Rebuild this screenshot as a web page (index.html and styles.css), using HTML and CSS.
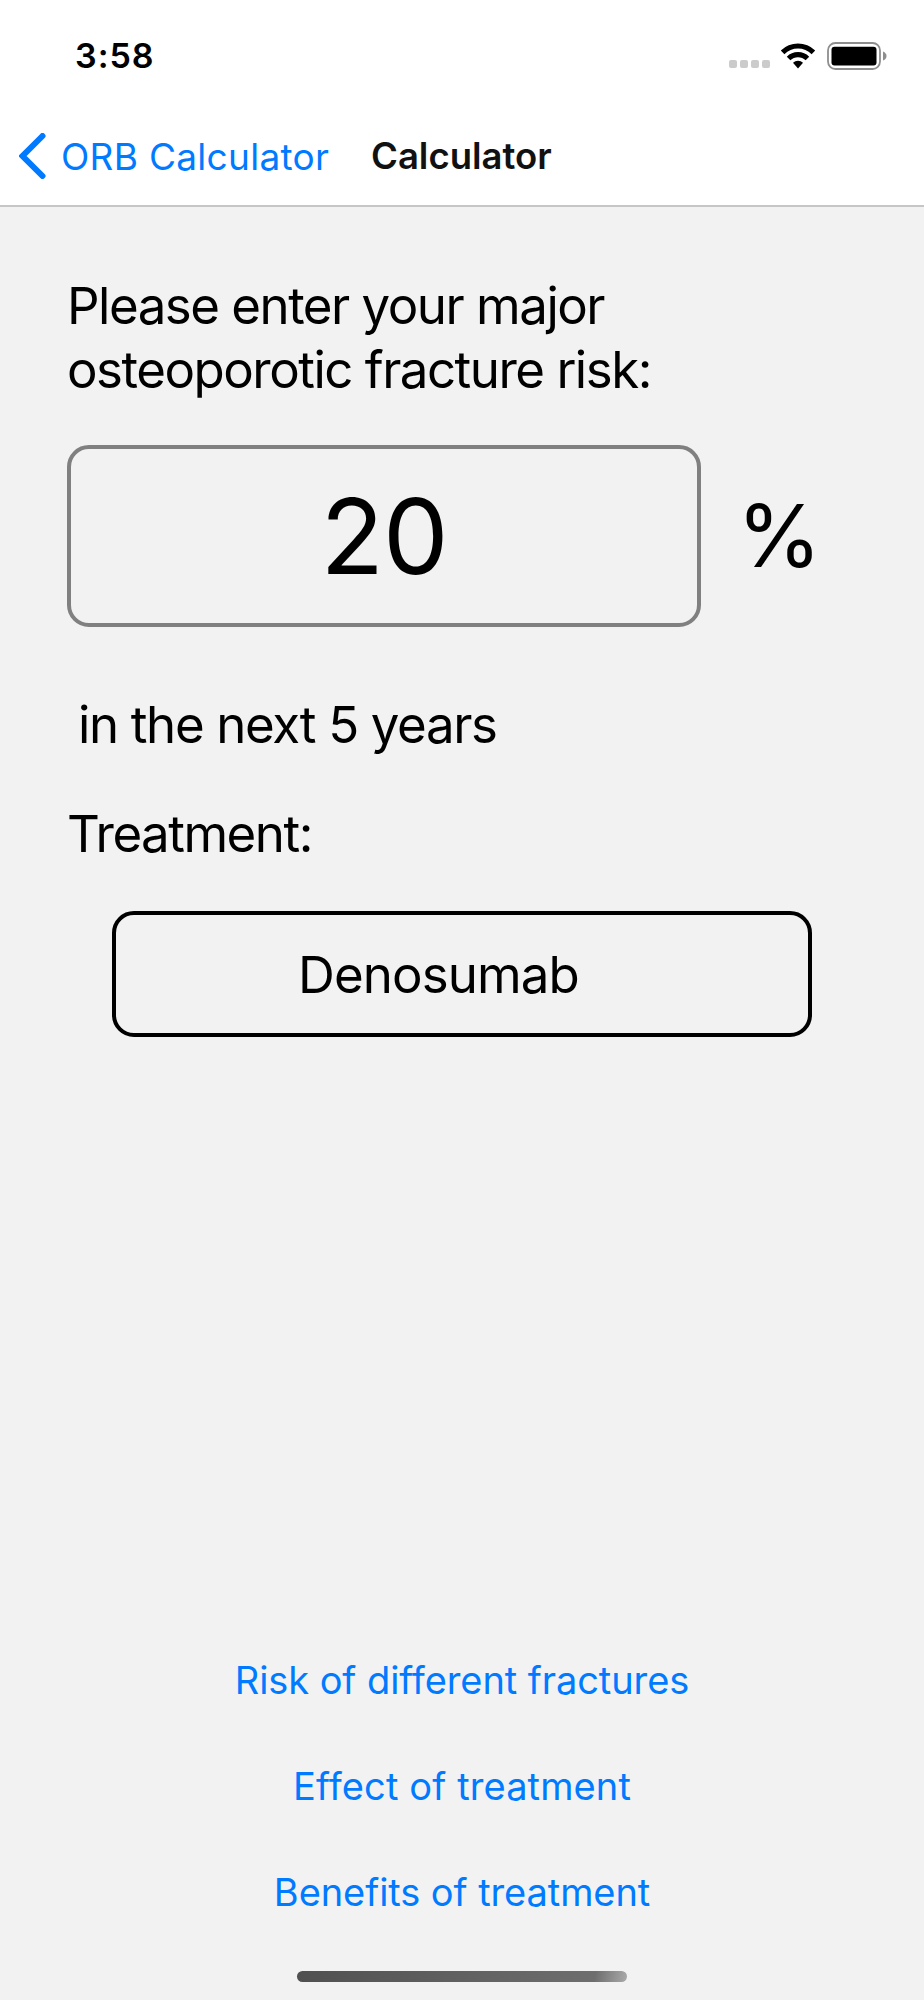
FILE: index.html
```
<!DOCTYPE html>
<html lang="en">
<head>
  <meta charset="UTF-8">
  <title>Calculator</title>
  <link rel="stylesheet" href="styles.css">
</head>
<body>

<header>
  <div class="status">
    <span class="time">3:58</span>
    <div class="icons">
      <div class="signal"><i></i><i></i><i></i><i></i></div>
      <svg class="wifi" width="36" height="28" viewBox="0 0 36 28">
        <path d="M0.8 8.6 A24.3 24.3 0 0 1 35.2 8.6 L31.6 12.2 A19.2 19.2 0 0 0 4.4 12.2 Z"/>
        <path d="M6.8 14.7 A15.8 15.8 0 0 1 29.2 14.7 L25.6 18.3 A10.8 10.8 0 0 0 10.4 18.3 Z"/>
        <path d="M13 20.8 A7.2 7.2 0 0 1 23 20.8 L18 26.4 Z"/>
      </svg>
      <svg class="battery" width="60" height="28" viewBox="0 0 60 28">
        <rect x="1" y="1" width="52" height="26" rx="7.5" fill="none" stroke="#8e8e8e" stroke-width="1.8"/>
        <rect x="4.5" y="4.8" width="45" height="18.6" rx="3"/>
        <path d="M56 9.5 Q59.5 11 59.5 14 Q59.5 17 56 18.5 Z" fill="#8e8e8e"/>
      </svg>
    </div>
  </div>
  <nav class="nav">
    <a class="back">
      <svg width="28" height="46" viewBox="0 0 28 46">
        <path d="M23.5 3 L3.5 23 L23.5 43" fill="none" stroke="#007aff" stroke-width="6" stroke-linecap="round"/>
      </svg>
      <span>ORB Calculator</span>
    </a>
    <h1>Calculator</h1>
  </nav>
</header>

<main>
  <p class="question">Please enter your major<br>osteoporotic fracture risk:</p>
  <div class="risk">
    <div class="input">20</div>
    <span class="percent">%</span>
  </div>
  <p class="years">in the next 5 years</p>
  <p class="label">Treatment:</p>
  <div class="select"><span>Denosumab</span></div>

  <div class="links">
    <a class="risks">Risk of different fractures</a>
    <a class="effect">Effect of treatment</a>
    <a class="benefits">Benefits of treatment</a>
  </div>
  <div class="home"></div>
</main>

</body>
</html>
```
FILE: styles.css
```
* {
  box-sizing: border-box;
}
body {
  margin: 0;
  height: 2000px;
  display: flex;
  flex-direction: column;
  font-family: Inter, sans-serif;
  background-color: #f2f2f2;
  color: #000;
}
h1, p {
  margin: 0;
  font-weight: 400;
}
svg {
  display: block;
}
span, h1, a {
  white-space: nowrap;
}
header {
  height: 207px;
  background-color: #fff;
  border-bottom: 2px solid #c6c6c6;
}
.status {
  height: 111px;
  padding: 0 37px 0 75px;
  display: flex;
  justify-content: space-between;
  align-items: center;
}
.time {
  font-size: 34px;
  font-weight: 600;
  letter-spacing: 1px;
}
.icons {
  display: flex;
  align-items: flex-end;
}
.signal {
  display: flex;
  gap: 3px;
  padding-bottom: 2px;
  margin-right: 10px;
}
.signal i {
  width: 8px;
  height: 8px;
  border-radius: 2px;
  background-color: #cbcbcb;
}
.wifi {
  margin-right: 11px;
}
.nav {
  height: 90px;
  padding-left: 19px;
  display: flex;
  align-items: center;
}
.back {
  display: flex;
  align-items: center;
  width: 352px;
  color: #007aff;
  font-size: 37px;
  letter-spacing: 0.3px;
}
.back span {
  margin-left: 14px;
}
.nav h1 {
  font-size: 36.5px;
  font-weight: 600;
  color: #111;
}
main {
  flex: 1;
  padding: 67px 0 18px 67px;
  display: flex;
  flex-direction: column;
}
.question, .years, .label, .select {
  font-size: 51px;
  line-height: 64px;
  letter-spacing: -1.5px;
}
.risk {
  display: flex;
  align-items: center;
  margin-top: 43px;
}
.input {
  width: 634px;
  height: 182px;
  border: 4px solid #808080;
  border-radius: 22px;
  font-size: 104px;
  line-height: 174px;
  letter-spacing: -1px;
  text-align: center;
}
.percent {
  margin-left: 36px;
  font-size: 86px;
}
.years {
  margin-top: 66px;
  padding-left: 11px;
  letter-spacing: -1.35px;
}
.label {
  margin-top: 45px;
}
.select {
  width: 700px;
  height: 126px;
  margin: 45px 0 0 45px;
  padding-left: 182px;
  border: 4px solid #000;
  border-radius: 22px;
  line-height: 119px;
  letter-spacing: -0.9px;
}
.links {
  margin: auto 0 0 -67px;
  padding-bottom: 26px;
  display: flex;
  flex-direction: column;
  align-items: center;
  font-size: 38px;
  line-height: 106px;
  letter-spacing: -0.08px;
  color: #007aff;
}
.links .effect {
  letter-spacing: 0.12px;
}
.home {
  width: 330px;
  height: 11px;
  margin-left: 230px;
  border-radius: 6px;
  background: linear-gradient(100deg, #505050, #6e6e6e 90%, #aaa);
}
```
